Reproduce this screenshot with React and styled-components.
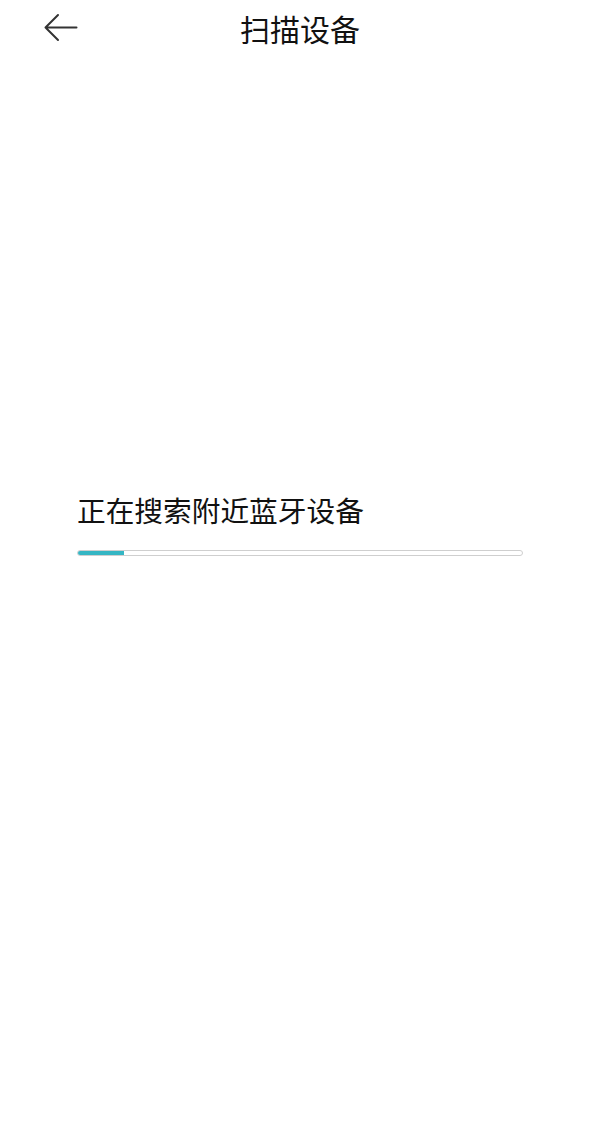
import React from "react";
import styled, { createGlobalStyle } from "styled-components";

const GlobalStyle = createGlobalStyle`
  html, body {
    margin: 0;
    padding: 0;
    background: #fff;
  }
  body {
    font-family: "Noto Sans CJK SC", "Noto Sans", sans-serif;
  }
`;

const Page = styled.div`
  width: 600px;
  height: 1130px;
  background: #fff;
  display: flex;
  flex-direction: column;
`;

const Header = styled.div`
  height: 60px;
  box-sizing: border-box;
  padding-bottom: 4px;
  display: grid;
  grid-template-columns: 100px 1fr 100px;
  align-items: center;
`;

const BackButton = styled.button`
  border: none;
  background: none;
  padding: 0;
  margin-left: 44px;
  width: 34px;
  height: 30px;
  display: flex;
  align-items: center;
  cursor: pointer;
`;

const Title = styled.h1`
  margin: 0;
  text-align: center;
  font-size: 30px;
  font-weight: 400;
  color: #111;
  line-height: 1;
`;

const Body = styled.div`
  padding: 430px 77px 0;
  display: flex;
  flex-direction: column;
`;

const Status = styled.p`
  margin: 0;
  font-size: 28.7px;
  line-height: 40px;
  color: #111;
`;

const Track = styled.div`
  margin-top: 20px;
  height: 6px;
  width: 446px;
  box-sizing: border-box;
  border: 1px solid #cfcfcf;
  border-radius: 3px;
  background: #fff;
  overflow: hidden;
  position: relative;
`;

const Fill = styled.div`
  position: absolute;
  left: -1px;
  top: -1px;
  bottom: -1px;
  background: #35b6c4;
  border-radius: 3px 0 0 3px;
`;

const ArrowLeft = () => (
  <svg width="34" height="30" viewBox="0 0 34 30" fill="none">
    <path d="M1.5 14.5 H32.5 M14 2 L1.5 14.5 L14 27" stroke="#333" strokeWidth="2" strokeLinecap="round" strokeLinejoin="round" />
  </svg>
);

export default function App() {
  const progress = 46;
  return (
    <Page>
      <GlobalStyle />
      <Header>
        <BackButton aria-label="返回">
          <ArrowLeft />
        </BackButton>
        <Title>扫描设备</Title>
        <div />
      </Header>
      <Body>
        <Status>正在搜索附近蓝牙设备</Status>
        <Track>
          <Fill style={{ width: progress + 1 }} />
        </Track>
      </Body>
    </Page>
  );
}
